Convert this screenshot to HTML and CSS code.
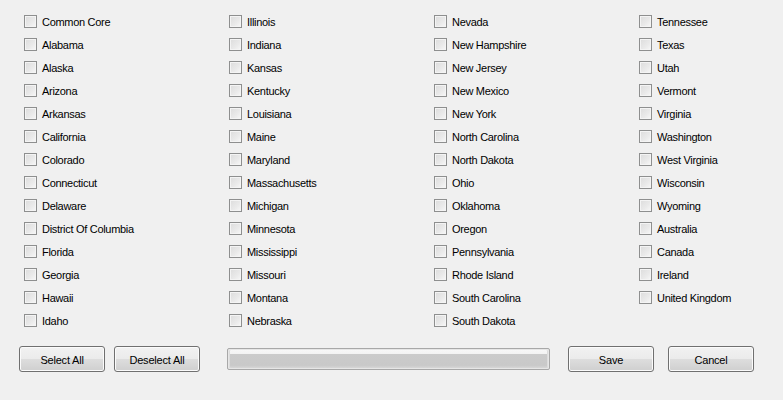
FILE: index.html
```html
<!DOCTYPE html>
<html>
<head>
<meta charset="utf-8">
<link rel="stylesheet" href="styles.css">
</head>
<body>
<div class="list">
  <label class="item"><span class="box"></span>Common Core</label>
  <label class="item"><span class="box"></span>Alabama</label>
  <label class="item"><span class="box"></span>Alaska</label>
  <label class="item"><span class="box"></span>Arizona</label>
  <label class="item"><span class="box"></span>Arkansas</label>
  <label class="item"><span class="box"></span>California</label>
  <label class="item"><span class="box"></span>Colorado</label>
  <label class="item"><span class="box"></span>Connecticut</label>
  <label class="item"><span class="box"></span>Delaware</label>
  <label class="item"><span class="box"></span>District Of Columbia</label>
  <label class="item"><span class="box"></span>Florida</label>
  <label class="item"><span class="box"></span>Georgia</label>
  <label class="item"><span class="box"></span>Hawaii</label>
  <label class="item"><span class="box"></span>Idaho</label>
  <label class="item"><span class="box"></span>Illinois</label>
  <label class="item"><span class="box"></span>Indiana</label>
  <label class="item"><span class="box"></span>Kansas</label>
  <label class="item"><span class="box"></span>Kentucky</label>
  <label class="item"><span class="box"></span>Louisiana</label>
  <label class="item"><span class="box"></span>Maine</label>
  <label class="item"><span class="box"></span>Maryland</label>
  <label class="item"><span class="box"></span>Massachusetts</label>
  <label class="item"><span class="box"></span>Michigan</label>
  <label class="item"><span class="box"></span>Minnesota</label>
  <label class="item"><span class="box"></span>Mississippi</label>
  <label class="item"><span class="box"></span>Missouri</label>
  <label class="item"><span class="box"></span>Montana</label>
  <label class="item"><span class="box"></span>Nebraska</label>
  <label class="item"><span class="box"></span>Nevada</label>
  <label class="item"><span class="box"></span>New Hampshire</label>
  <label class="item"><span class="box"></span>New Jersey</label>
  <label class="item"><span class="box"></span>New Mexico</label>
  <label class="item"><span class="box"></span>New York</label>
  <label class="item"><span class="box"></span>North Carolina</label>
  <label class="item"><span class="box"></span>North Dakota</label>
  <label class="item"><span class="box"></span>Ohio</label>
  <label class="item"><span class="box"></span>Oklahoma</label>
  <label class="item"><span class="box"></span>Oregon</label>
  <label class="item"><span class="box"></span>Pennsylvania</label>
  <label class="item"><span class="box"></span>Rhode Island</label>
  <label class="item"><span class="box"></span>South Carolina</label>
  <label class="item"><span class="box"></span>South Dakota</label>
  <label class="item"><span class="box"></span>Tennessee</label>
  <label class="item"><span class="box"></span>Texas</label>
  <label class="item"><span class="box"></span>Utah</label>
  <label class="item"><span class="box"></span>Vermont</label>
  <label class="item"><span class="box"></span>Virginia</label>
  <label class="item"><span class="box"></span>Washington</label>
  <label class="item"><span class="box"></span>West Virginia</label>
  <label class="item"><span class="box"></span>Wisconsin</label>
  <label class="item"><span class="box"></span>Wyoming</label>
  <label class="item"><span class="box"></span>Australia</label>
  <label class="item"><span class="box"></span>Canada</label>
  <label class="item"><span class="box"></span>Ireland</label>
  <label class="item"><span class="box"></span>United Kingdom</label>
</div>
<div class="actions">
  <button class="btn">Select All</button>
  <button class="btn btn-deselect">Deselect All</button>
  <div class="progress"><div class="progress-fill"></div></div>
  <button class="btn btn-save">Save</button>
  <button class="btn btn-cancel">Cancel</button>
</div>
</body>
</html>
```

FILE: styles.css
```css
html, body {
  margin: 0;
  padding: 0;
  background: #f0f0f0;
  width: 783px;
  height: 400px;
  overflow: hidden;
  font-family: "Liberation Sans", Arial, sans-serif;
  font-size: 11px;
  color: #000;
}

.list {
  display: grid;
  grid-auto-flow: column;
  grid-template-rows: repeat(14, 23px);
  grid-template-columns: repeat(3, 205px) 130px;
  padding: 10px 0 0 24px;
}

.item {
  display: flex;
  align-items: center;
  white-space: nowrap;
  letter-spacing: -0.3px;
}

.box {
  box-sizing: border-box;
  width: 13px;
  height: 13px;
  margin-right: 5px;
  border: 1px solid #8e8f8f;
  background: linear-gradient(135deg, #dcdcdc 0%, #eaeaea 60%, #f8f8f8 100%);
  box-shadow: inset 0 0 0 1px #f4f4f4;
  flex: none;
}

.actions {
  display: flex;
  align-items: center;
  padding-left: 19px;
  margin-top: 14px;
  height: 26px;
}

.btn {
  box-sizing: border-box;
  width: 86px;
  height: 26px;
  border: 1px solid #707070;
  border-radius: 3px;
  background: linear-gradient(#f2f2f2 0%, #ebebeb 48%, #dddddd 52%, #cfcfcf 100%);
  box-shadow: inset 0 0 0 1px #fbfbfb;
  font-family: "Liberation Sans", Arial, sans-serif;
  font-size: 11px;
  letter-spacing: -0.2px;
  color: #000;
  padding: 1px 0 0;
  flex: none;
}

.btn-deselect { margin-left: 9px; }
.btn-save { margin-left: 18px; }
.btn-cancel { margin-left: 14px; }

.progress {
  box-sizing: border-box;
  margin-left: 27px;
  width: 323px;
  height: 22px;
  border: 1px solid #a8a8a8;
  border-radius: 2px;
  background: #e6e6e6;
  padding: 1px;
}

.progress-fill {
  height: 100%;
  border-radius: 1px;
  background: linear-gradient(#f7f7f7 0%, #f3f3f3 20%, #cbcbcb 25%, #c9c9c9 85%, #d6d6d6 100%);
  box-shadow: inset 1px 0 0 #dcdcdc, inset -1px 0 0 #dcdcdc;
}
```
